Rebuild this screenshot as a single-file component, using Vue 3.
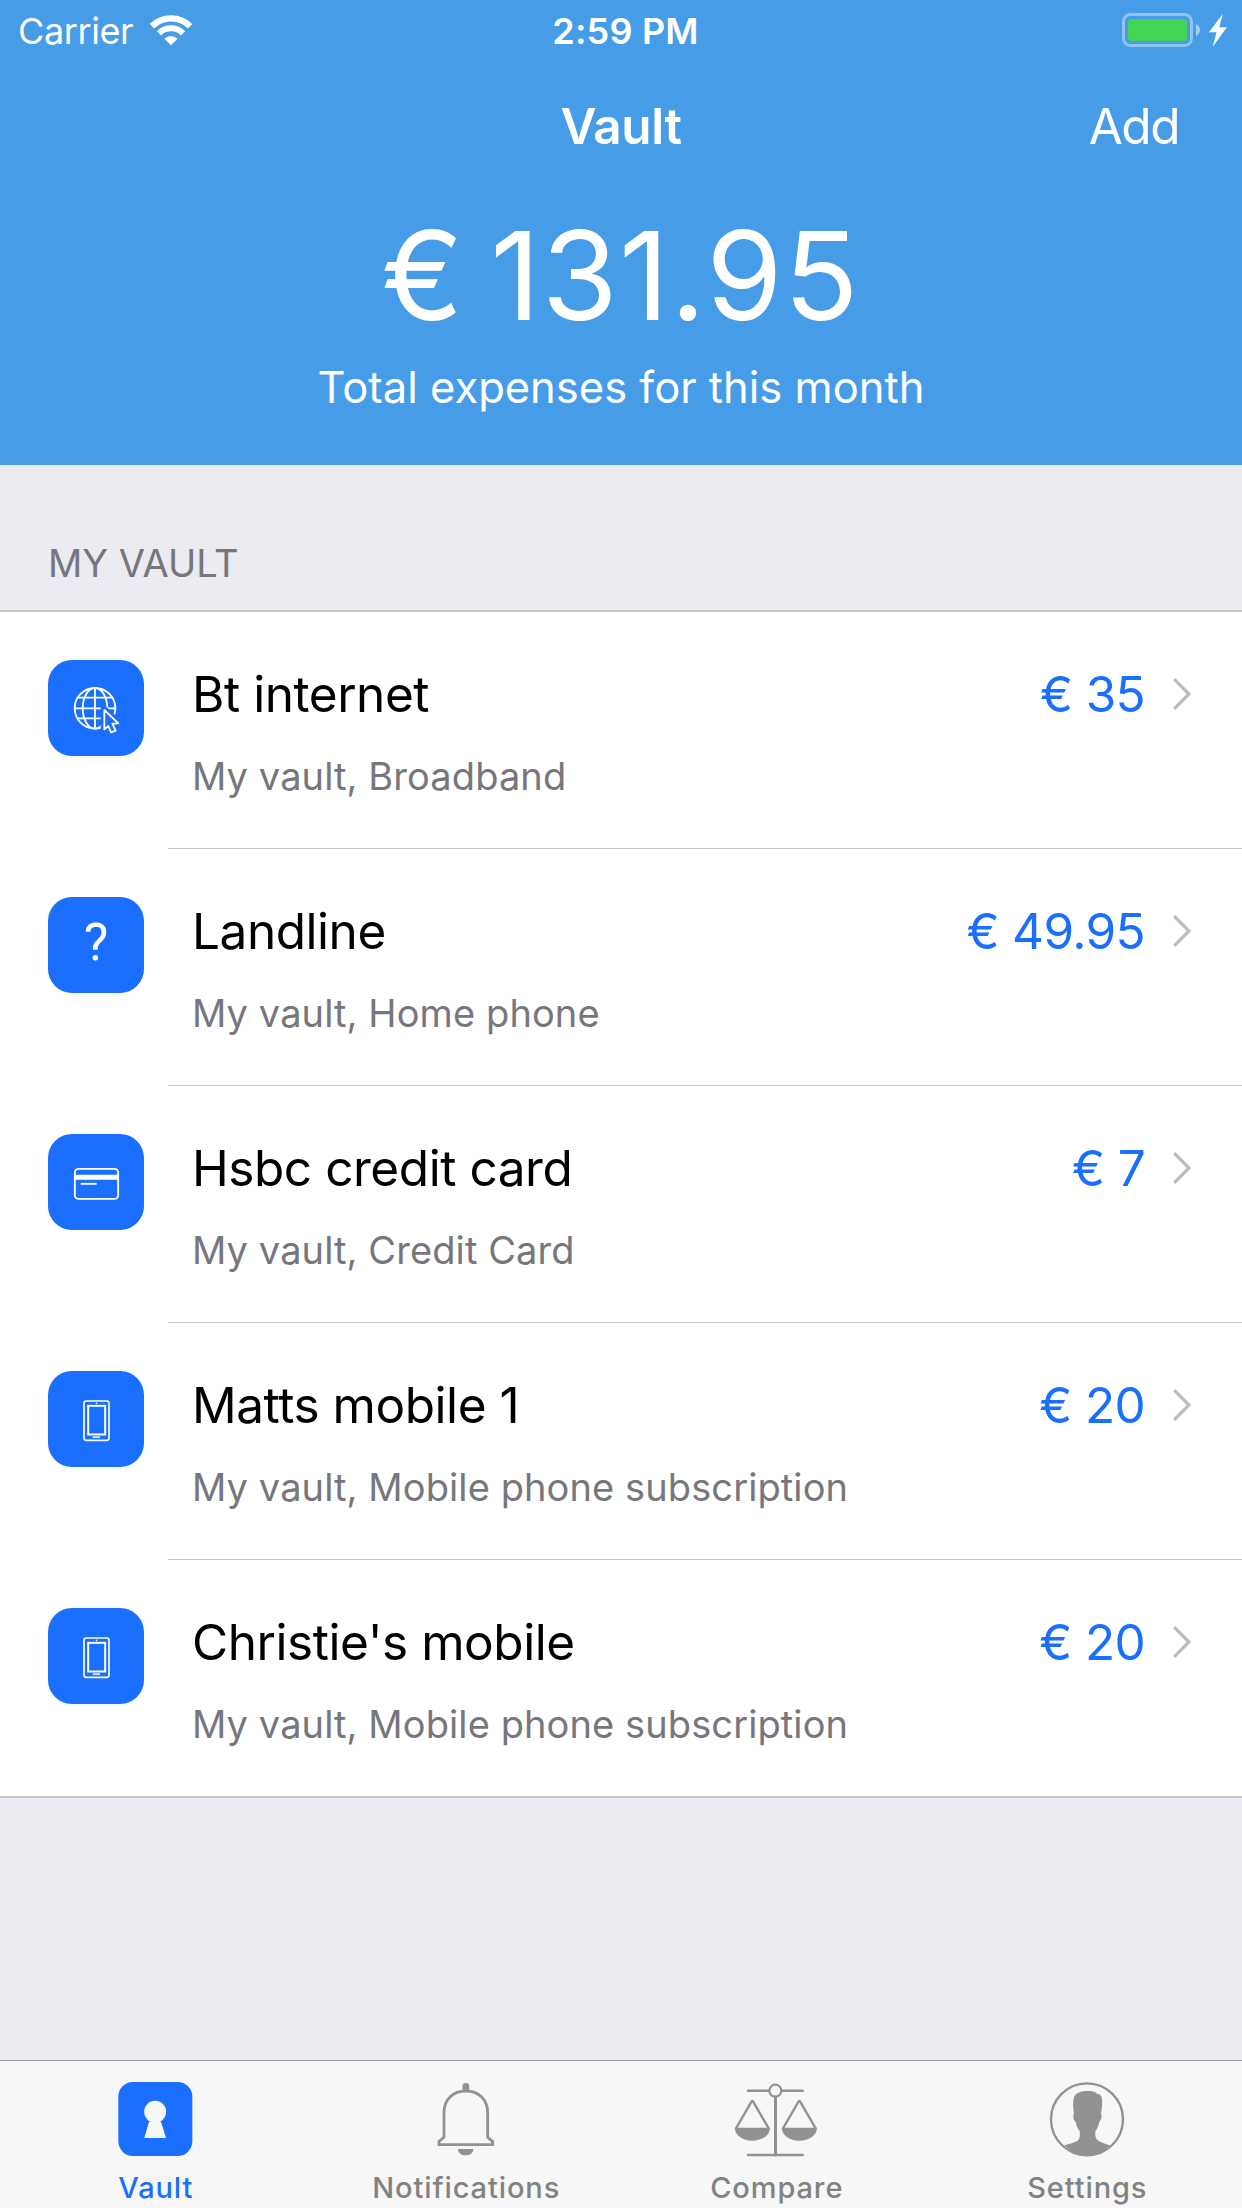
<script setup>
const rows = [
  { icon: 'globe', title: 'Bt internet', detail: 'My vault, Broadband', price: '€ 35' },
  { icon: 'unknown', title: 'Landline', detail: 'My vault, Home phone', price: '€ 49.95' },
  { icon: 'card', title: 'Hsbc credit card', detail: 'My vault, Credit Card', price: '€ 7' },
  { icon: 'phone', title: 'Matts mobile 1', detail: 'My vault, Mobile phone subscription', price: '€ 20' },
  { icon: 'phone', title: "Christie's mobile", detail: 'My vault, Mobile phone subscription', price: '€ 20' },
]

const tabs = [
  { icon: 'vault', label: 'Vault', active: true },
  { icon: 'bell', label: 'Notifications' },
  { icon: 'scales', label: 'Compare' },
  { icon: 'person', label: 'Settings' },
]
</script>

<template>
  <div class="screen">
    <header class="header">
      <div class="status">
        <div class="carrier">
          <span>Carrier</span>
          <svg class="wifi" viewBox="0 0 132 96" fill="none" stroke="#fff">
            <path d="M8.7 36.7A81 81 0 0 1 123.3 36.7" stroke-width="19" />
            <path d="M29.9 57.9A51 51 0 0 1 102.1 57.9" stroke-width="18" />
            <path d="M66 94L46.2 74.2A28 28 0 0 1 85.8 74.2Z" fill="#fff" stroke="none" />
          </svg>
        </div>
        <span class="time">2:59 PM</span>
        <div class="power">
          <svg class="battery" viewBox="0 0 107 34">
            <rect x="1.5" y="1.5" width="68" height="31" rx="7" fill="none" stroke="#fff" stroke-opacity=".4" stroke-width="3" />
            <rect x="6" y="6" width="59" height="22" rx="3.5" fill="#44d554" />
            <path d="M74 11C76.600 12 78 14.500 78 17S76.600 22 74 23Z" fill="#fff" fill-opacity=".5" />
            <path d="M100.800 1L87 19.300H94.500L90.700 33.800L105 14.300H97.300Z" fill="#fff" />
          </svg>
        </div>
      </div>
      <nav class="navbar">
        <h1 class="title">Vault</h1>
        <span class="add">Add</span>
      </nav>
      <div class="amount">€ 131.95</div>
      <div class="caption">Total expenses for this month</div>
    </header>

    <main class="content">
      <h2 class="section">MY VAULT</h2>
      <ul class="list">
        <li v-for="row in rows" :key="row.title" class="row">
          <div class="tile">
            <svg v-if="row.icon === 'globe'" viewBox="0 0 288 288" fill="none" stroke="#fff" stroke-width="5.500">
              <circle cx="141" cy="145" r="61" />
              <ellipse cx="141" cy="145" rx="37" ry="61" />
              <path d="M141 84V206M89 113H193M80 145H202M89 175H193" />
              <path d="M169 150L211 190L194 192L204 212L188 218L180 200L169 208Z" fill="#1a6fff" stroke="#1a6fff" stroke-width="22" />
              <path d="M169 150L211 190L193 191L203 212L189 217L181 198L169 208Z" stroke-linejoin="round" />
            </svg>
            <span v-else-if="row.icon === 'unknown'" class="mark">?</span>
            <svg v-else-if="row.icon === 'card'" viewBox="0 0 288 288" fill="none" stroke="#fff" stroke-width="5.500">
              <rect x="80.500" y="104.500" width="130" height="90" rx="11" />
              <path d="M80 130H211" stroke-width="15" />
              <path d="M98 149.500H146" stroke-width="5.500" />
            </svg>
            <svg v-else viewBox="0 0 288 288" fill="none" stroke="#fff">
              <rect x="108" y="90" width="75" height="118" rx="7" stroke-width="5" />
              <rect x="120.500" y="104.500" width="51" height="86" stroke-width="6" />
              <path d="M134 198.500H156" stroke-width="4.500" />
              <circle cx="145.500" cy="97" r="2.500" fill="#fff" stroke="none" />
            </svg>
          </div>
          <div class="body">
            <div class="texts">
              <div class="name">{{ row.title }}</div>
              <div class="detail">{{ row.detail }}</div>
            </div>
            <div class="price">{{ row.price }}</div>
            <svg class="chevron" viewBox="0 0 18 32" fill="none" stroke="#bcbbc2" stroke-width="3.200">
              <path d="M1.200 1.200L16 16L1.200 30.800" />
            </svg>
          </div>
        </li>
      </ul>
    </main>

    <footer class="tabbar">
      <div v-for="tab in tabs" :key="tab.label" class="tab" :class="{ active: tab.active }">
        <svg v-if="tab.icon === 'vault'" viewBox="0 0 252 252">
          <rect x="16" y="15" width="222" height="222" rx="44" fill="#1a6fff" />
          <path d="M108 134L94 183H159L144 134Z" fill="#f7f7f7" />
          <circle cx="126.500" cy="104" r="33" fill="#f7f7f7" />
        </svg>
        <svg v-else-if="tab.icon === 'bell'" viewBox="0 0 252 252" fill="none" stroke="#929292" stroke-width="8.500">
          <path d="M60 181V107C60 67 88 42 125.500 42S191 67 191 107V181L206 193V203H45V193Z" />
          <path d="M115.500 43V28A10 10 0 0 1 135.500 28V43Z" fill="#929292" stroke="none" />
          <path d="M102 216H148C148 228 138 235 125 235S102 228 102 216Z" fill="#929292" stroke="none" />
        </svg>
        <svg v-else-if="tab.icon === 'scales'" viewBox="0 0 252 252" fill="none" stroke="#929292" stroke-width="7.500" stroke-linecap="round" stroke-linejoin="round">
          <path d="M42 41H103M145 41H206M42 234H206" />
          <path d="M124.500 62V234" stroke-width="9" />
          <circle cx="124" cy="41" r="18" stroke-width="6.500" />
          <path d="M6 154L52.500 74Q55 70 57.500 74L104 154M147 154L193.500 74Q196 70 198.500 74L245 154" stroke-width="7" />
          <path d="M2.500 152H108C108 174 85 191 55 191S2.500 174 2.500 152ZM143.500 152H249C249 174 226 191 196 191S143.500 174 143.500 152Z" fill="#929292" stroke="none" />
        </svg>
        <svg v-else viewBox="0 0 252 252">
          <circle cx="126" cy="127" r="108" fill="none" stroke="#929292" stroke-width="7" />
          <path d="M126 42C105 42 91 49 87 61C83 74 84 91 87 111C83 114 85 131 92 135C94 147 98 155 104 162C105 172 105 181 102 186C98 195 83 197 58 205C77 224 98 235 126 237C154 235 176 224 195 205C171 197 156 192 153 182C150 177 151 170 151 163C157 155 161 145 163 134C169 129 172 114 168 111C171 94 173 75 170 61C168 52 161 51 156 50C150 43 138 42 126 42Z" fill="#929292" />
        </svg>
        <span class="label">{{ tab.label }}</span>
      </div>
    </footer>
  </div>
</template>

<style>
body {
  margin: 0;
}
</style>

<style scoped>
.screen {
  display: flex;
  flex-direction: column;
  width: 1242px;
  height: 2208px;
  overflow: hidden;
  background: #ebebf1;
  font-family: Inter, "Liberation Sans", sans-serif;
}

.header {
  height: 465px;
  background: #469ce6;
  color: #fff;
  text-align: center;
}

.status {
  display: grid;
  grid-template-columns: 1fr auto 1fr;
  height: 60px;
  font-size: 36px;
  line-height: 62px;
}

.carrier {
  display: flex;
  padding-left: 18px;
  letter-spacing: -0.4px;
}

.wifi {
  width: 44px;
  height: 32px;
  margin: 14px 0 0 16px;
}

.time {
  padding-left: 9px;
  font-weight: 600;
  letter-spacing: 0.2px;
}

.power {
  display: flex;
  justify-content: flex-end;
  padding: 13px 13px 0 0;
}

.battery {
  width: 107px;
  height: 34px;
}

.navbar {
  display: grid;
  grid-template-columns: 1fr auto 1fr;
  height: 132px;
  line-height: 133px;
  font-size: 49.5px;
}

.title {
  grid-column: 2;
  margin: 0;
  font-size: inherit;
  font-weight: 600;
  letter-spacing: -0.4px;
}

.add {
  padding-right: 63px;
  text-align: right;
  letter-spacing: -1.5px;
}

.amount {
  height: 147px;
  margin-top: 10px;
  padding-right: 1px;
  font-size: 123px;
  line-height: 147px;
  letter-spacing: 1.3px;
  word-spacing: -10px;
}

.caption {
  margin-top: 8px;
  font-size: 43.5px;
  line-height: 60px;
}

.content {
  flex: 1;
}

.section {
  height: 50px;
  margin: 0;
  padding: 73px 48px 22px;
  color: #77767c;
  font-size: 38px;
  font-weight: 400;
  line-height: 50px;
}

.list {
  margin: 0;
  padding: 0;
  border-top: 2px solid #c9c9cb;
  border-bottom: 2px solid #c9c9cb;
  background: #fff;
  list-style: none;
}

.row {
  display: flex;
  padding-left: 48px;
}

.tile {
  display: flex;
  justify-content: center;
  width: 96px;
  height: 96px;
  margin: 48px 24px 0 0;
  border-radius: 24px;
  background: #1a6fff;
  color: #fff;
}

.tile svg {
  width: 96px;
  height: 96px;
}

.mark {
  font: 400 52px/91px Roboto, sans-serif;
}

.body {
  display: flex;
  flex: 1;
  height: 236px;
  padding: 0 51px 0 24px;
  border-bottom: 1px solid #c9c9cb;
}

.row:last-child .body {
  border-bottom: 0;
}

.row:last-child {
  height: 236px;
}

.texts {
  flex: 1;
  padding-top: 52px;
}

.name {
  color: #000;
  font-size: 49.5px;
  line-height: 60px;
  letter-spacing: -0.45px;
}

.detail {
  margin-top: 27px;
  color: #77767c;
  font-size: 38px;
  line-height: 50px;
  letter-spacing: 0.1px;
}

.price {
  padding-top: 52px;
  color: #1a6fff;
  font-size: 49.5px;
  line-height: 60px;
  letter-spacing: -0.65px;
}

.chevron {
  width: 18px;
  height: 32px;
  margin: 66px 0 0 28px;
}

.tabbar {
  display: flex;
  height: 147px;
  border-top: 1px solid #98979d;
  background: #f7f7f7;
}

.tab {
  display: flex;
  flex: 1;
  flex-direction: column;
  align-items: center;
  padding-top: 16px;
  color: #828282;
}

.tab svg {
  width: 84px;
  height: 84px;
}

.active {
  color: #1a6fff;
}

.label {
  margin-top: 7px;
  padding-left: 1px;
  font-size: 29px;
  font-weight: 500;
  line-height: 40px;
  letter-spacing: 0.9px;
}
</style>
